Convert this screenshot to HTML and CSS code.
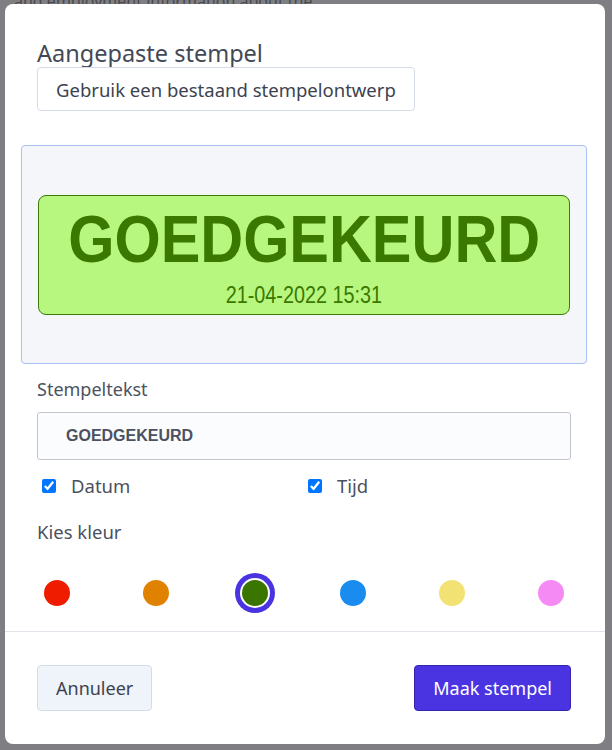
FILE: index.html
```html
<!DOCTYPE html>
<html>
	<head>
		<meta charset="utf-8">
		<title>Aangepaste stempel</title>
		<link rel="stylesheet" href="styles.css">
	</head>
	<body>
	  <div class="backdrop">
	    <p class="bg-line">and employment information about the</p>
	  </div>

	  <div class="modal">
	    <div class="modal-body">
	      <h2 class="title">Aangepaste stempel</h2>
	      <button class="btn btn-light btn-pick">Gebruik een bestaand stempelontwerp</button>

	      <div class="preview">
	        <div class="stamp">
	          <span class="stamp-text">GOEDGEKEURD</span>
	          <span class="stamp-date">21-04-2022 15:31</span>
	        </div>
	      </div>

	      <label class="field-label" for="stamptext">Stempeltekst</label>
	      <input id="stamptext" class="text-input" type="text" value="GOEDGEKEURD">

	      <div class="checks">
	        <label class="check"><input type="checkbox" checked> <span>Datum</span></label>
	        <label class="check"><input type="checkbox" checked> <span>Tijd</span></label>
	      </div>

	      <div class="field-label colors-label">Kies kleur</div>
	      <div class="colors">
	        <span class="swatch"><i class="dot red"></i></span>
	        <span class="swatch"><i class="dot orange"></i></span>
	        <span class="swatch"><i class="dot green active"></i></span>
	        <span class="swatch"><i class="dot blue"></i></span>
	        <span class="swatch"><i class="dot yellow"></i></span>
	        <span class="swatch"><i class="dot pink"></i></span>
	      </div>
	    </div>

	    <div class="modal-footer">
	      <button class="btn btn-light">Annuleer</button>
	      <button class="btn btn-primary">Maak stempel</button>
	    </div>
	  </div>
	</body>
</html>
```

FILE: styles.css
```css
html, body { margin: 0; padding: 0; }
body {
  width: 612px; height: 750px;
  overflow: hidden;
  position: relative;
  background: #7f7f83;
  font-family: "Noto Sans", "Open Sans", sans-serif;
}

.backdrop { height: 750px; }
.bg-line {
  margin: 0;
  position: relative; top: -10px;
  padding-left: 14px;
  font-size: 16px;
  color: #4a4a4e;
}

/* dialog on top of the page */
.modal {
  position: absolute;
  left: 5px; top: 4px;
  width: 600px; height: 740px;
  background: #fff;
  border-radius: 8px;
  display: flex; flex-direction: column;
}
.modal-body {
  padding: 35px 34px 18px 32px;
  display: flex; flex-direction: column;
  align-items: flex-start;
  border-bottom: 1px solid #e2e3ea;
}

.title {
  margin: 0;
  font-size: 23.5px; line-height: 28px;
  font-weight: 400;
  color: #434856;
}

.btn {
  font-family: inherit;
  font-size: 18px;
  height: 46px;
  padding: 0 18px;
  border-radius: 4px;
  cursor: pointer;
}
.btn-light {
  background: #eff3fa;
  border: 1px solid #d6dbe8;
  color: #3d4250;
}
.btn-pick {
  height: 44px;
  font-size: 18.5px;
  background: #fff;
}
.btn-primary {
  background: #4a34e2;
  border: 1px solid #3424b0;
  color: #fff;
}

.preview {
  align-self: stretch;
  margin: 34px -16px 0 -16px;
  height: 217px;
  background: #f4f6fa;
  border: 1px solid #a9bff5;
  border-radius: 4px;
  display: flex; align-items: center; justify-content: center;
}
.stamp {
  width: 530px; height: 118px;
  background: #b7f77f;
  border: 1px solid #3b7a08;
  border-radius: 8px;
  display: flex; flex-direction: column; align-items: center;
  color: #3a7800;
  font-family: "Liberation Sans", Arial, sans-serif;
}
.stamp-text {
  display: block;
  font-size: 66px; font-weight: 700;
  line-height: 66px;
  margin-top: 10px;
  transform: scaleX(0.9);
}
.stamp-date {
  display: block;
  font-size: 23px;
  line-height: 26px;
  margin-top: 10px;
  transform: scaleX(0.86);
}

.field-label {
  font-size: 18px; line-height: 26px;
  color: #4b5160;
  margin-top: 12px;
}
.text-input {
  align-self: stretch;
  margin: 10px 0 0;
  height: 48px;
  box-sizing: border-box;
  padding: 0 28px;
  border: 1px solid #c3c6cf;
  border-radius: 3px;
  background: #fbfcfd;
  font-family: "Liberation Sans", Arial, sans-serif;
  font-size: 16px; font-weight: 700;
  color: #4b5160;
}

.checks {
  align-self: stretch;
  margin-top: 13px;
  display: grid; grid-template-columns: 1fr 1fr;
}
.check {
  display: flex; align-items: center;
  font-size: 18.5px; line-height: 26px;
  color: #4b5160;
}
.check input { width: 14px; height: 14px; margin: 0 15px 0 5px; }
.check + .check input { margin-left: 4px; }

.colors-label { margin-top: 20px; font-size: 18.5px; }

.colors {
  align-self: stretch;
  margin-top: 28px;
  display: flex; justify-content: space-between;
}
.swatch {
  width: 40px; height: 40px;
  display: flex; align-items: center; justify-content: center;
}
.dot {
  width: 26px; height: 26px;
  border-radius: 50%;
  display: block;
}
.dot.active { box-shadow: 0 0 0 2px #fff, 0 0 0 7px #4a34e2; }
.red { background: #f01c00; }
.orange { background: #e08200; }
.green { background: #3a7500; }
.blue { background: #1b8cef; }
.yellow { background: #f2e274; }
.pink { background: #f58af5; }

.modal-footer {
  flex: 1;
  padding: 0 34px 0 32px;
  display: flex; align-items: center; justify-content: space-between;
}
```
